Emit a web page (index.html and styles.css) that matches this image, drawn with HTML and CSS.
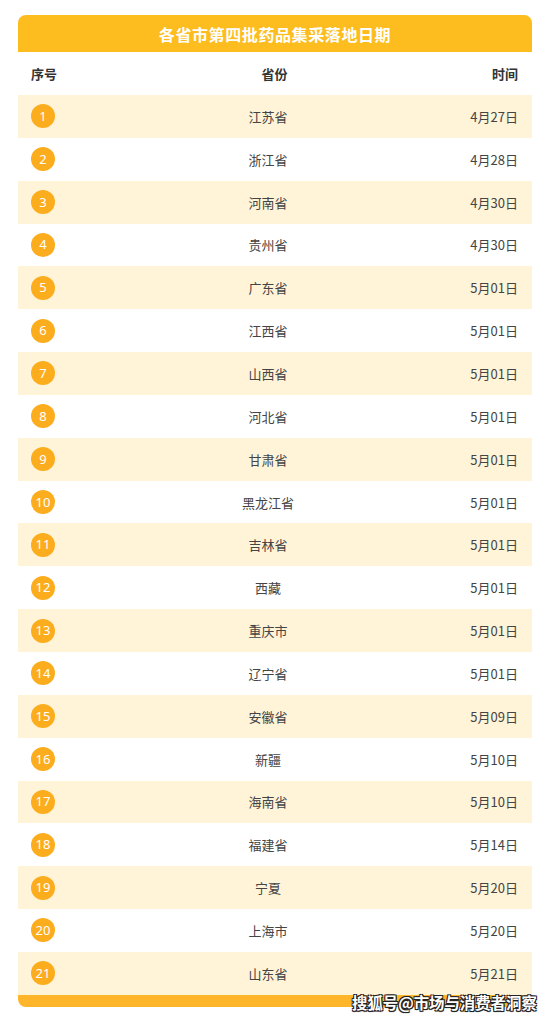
FILE: index.html
```html
<!DOCTYPE html>
<html lang="zh">
<head>
<meta charset="utf-8">
<link rel="stylesheet" href="styles.css">
</head>
<body>
<div class="card">
  <div class="title">各省市第四批药品集采落地日期</div>
  <div class="thead">
    <div class="c1">序号</div><div class="c2">省份</div><div class="c3">时间</div>
  </div>
  <div class="tbody">
    <div class="row alt"><div class="c1"><span class="num">1</span></div><div class="c2">江苏省</div><div class="c3">4月27日</div></div>
    <div class="row"><div class="c1"><span class="num">2</span></div><div class="c2">浙江省</div><div class="c3">4月28日</div></div>
    <div class="row alt"><div class="c1"><span class="num">3</span></div><div class="c2">河南省</div><div class="c3">4月30日</div></div>
    <div class="row"><div class="c1"><span class="num">4</span></div><div class="c2">贵州省</div><div class="c3">4月30日</div></div>
    <div class="row alt"><div class="c1"><span class="num">5</span></div><div class="c2">广东省</div><div class="c3">5月01日</div></div>
    <div class="row"><div class="c1"><span class="num">6</span></div><div class="c2">江西省</div><div class="c3">5月01日</div></div>
    <div class="row alt"><div class="c1"><span class="num">7</span></div><div class="c2">山西省</div><div class="c3">5月01日</div></div>
    <div class="row"><div class="c1"><span class="num">8</span></div><div class="c2">河北省</div><div class="c3">5月01日</div></div>
    <div class="row alt"><div class="c1"><span class="num">9</span></div><div class="c2">甘肃省</div><div class="c3">5月01日</div></div>
    <div class="row"><div class="c1"><span class="num">10</span></div><div class="c2">黑龙江省</div><div class="c3">5月01日</div></div>
    <div class="row alt"><div class="c1"><span class="num">11</span></div><div class="c2">吉林省</div><div class="c3">5月01日</div></div>
    <div class="row"><div class="c1"><span class="num">12</span></div><div class="c2">西藏</div><div class="c3">5月01日</div></div>
    <div class="row alt"><div class="c1"><span class="num">13</span></div><div class="c2">重庆市</div><div class="c3">5月01日</div></div>
    <div class="row"><div class="c1"><span class="num">14</span></div><div class="c2">辽宁省</div><div class="c3">5月01日</div></div>
    <div class="row alt"><div class="c1"><span class="num">15</span></div><div class="c2">安徽省</div><div class="c3">5月09日</div></div>
    <div class="row"><div class="c1"><span class="num">16</span></div><div class="c2">新疆</div><div class="c3">5月10日</div></div>
    <div class="row alt"><div class="c1"><span class="num">17</span></div><div class="c2">海南省</div><div class="c3">5月10日</div></div>
    <div class="row"><div class="c1"><span class="num">18</span></div><div class="c2">福建省</div><div class="c3">5月14日</div></div>
    <div class="row alt"><div class="c1"><span class="num">19</span></div><div class="c2">宁夏</div><div class="c3">5月20日</div></div>
    <div class="row"><div class="c1"><span class="num">20</span></div><div class="c2">上海市</div><div class="c3">5月20日</div></div>
    <div class="row alt"><div class="c1"><span class="num">21</span></div><div class="c2">山东省</div><div class="c3">5月21日</div></div>
  </div>
  <div class="foot"></div>
</div>
<div class="watermark">搜狐号@市场与消费者洞察</div>
</body>
</html>
```

FILE: styles.css
```css
* { box-sizing: border-box; }
html, body { margin: 0; padding: 0; background: #fff; }
body {
  width: 552px;
  height: 1022px;
  position: relative;
  font-family: "Noto Sans CJK SC", "Noto Sans", sans-serif;
  color: #3a3a3a;
  padding: 15px 20px 0 18px;
}
.card {
  width: 514px;
}
.title {
  height: 37px;
  background: #fdbd1f;
  border-radius: 8px 8px 0 0;
  color: #fff;
  font-weight: 700;
  font-size: 16px;
  letter-spacing: 0.6px;
  display: flex;
  align-items: center;
  justify-content: center;
  line-height: 1;
}
.thead, .row {
  display: grid;
  grid-template-columns: 120px 1fr 120px;
  align-items: center;
  padding: 0 14px 0 13px;
}
.thead {
  height: 43px;
  font-weight: 700;
  font-size: 13px;
  color: #333;
}
.row {
  height: 42.857px;
  font-size: 13px;
  color: #444;
}
.row.alt { background: #fff3d8; }
.c2 { text-align: center; }
.row .c2 { padding-right: 13px; }
.c3 { text-align: right; }
.num {
  display: flex;
  width: 24px;
  height: 24px;
  border-radius: 50%;
  background: #fcad1e;
  color: #fff;
  align-items: center;
  justify-content: center;
  font-size: 13px;
  font-family: "Noto Sans", sans-serif;
  line-height: 1;
}
.foot {
  height: 12px;
  background: #feb52a;
  border-radius: 0 0 8px 8px;
}
.watermark {
  position: absolute;
  left: 352px;
  top: 992px;
  font-size: 15.4px;
  font-weight: 700;
  color: #fff;
  line-height: 21px;
  white-space: nowrap;
  text-shadow: 1px 1px 0 #222, -1px -1px 0 #222, 1px -1px 0 #222, -1px 1px 0 #222, 0 1px 1px #000;
}
```
